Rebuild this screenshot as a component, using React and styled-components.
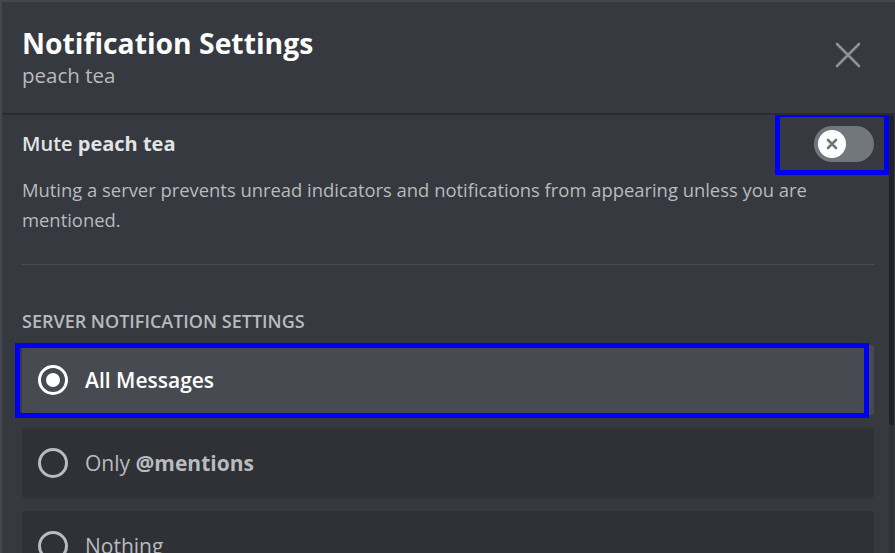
import React, { useState } from "react";
import styled, { createGlobalStyle } from "styled-components";

const GlobalStyle = createGlobalStyle`
  html, body {
    margin: 0;
    padding: 0;
    background: #36393f;
  }
  body {
    font-family: "Open Sans", "Noto Sans", "Liberation Sans", sans-serif;
  }
`;

const options = [
  { id: "all", label: "All Messages" },
  { id: "mentions", label: "Only ", strong: "@mentions" },
  { id: "nothing", label: "Nothing" },
];

const App = () => {
  const [muted, setMuted] = useState(false);
  const [level, setLevel] = useState("all");

  return (
    <>
      <GlobalStyle />
      <Modal>
        <Header>
          <HeaderText>
            <Title>Notification Settings</Title>
            <Subtitle>peach tea</Subtitle>
          </HeaderText>
          <CloseButton aria-label="Close">
            <svg width="26" height="26" viewBox="0 0 26 26">
              <path
                d="M2 2 L24 24 M24 2 L2 24"
                stroke="currentColor"
                strokeWidth="2.6"
                strokeLinecap="round"
              />
            </svg>
          </CloseButton>
        </Header>

        <Body>
          <Scroller>
            <MuteRow>
              <MuteLabel>
                Mute <strong>peach tea</strong>
              </MuteLabel>
              <ToggleWrap $highlight>
                <Toggle $on={muted} onClick={() => setMuted(!muted)}>
                  <Knob $on={muted}>
                    <svg width="12" height="12" viewBox="0 0 12 12">
                      <path
                        d="M2 2 L10 10 M10 2 L2 10"
                        stroke="#72767d"
                        strokeWidth="2.6"
                        strokeLinecap="round"
                      />
                    </svg>
                  </Knob>
                </Toggle>
              </ToggleWrap>
            </MuteRow>
            <Description>
              Muting a server prevents unread indicators and notifications from
              appearing unless you are mentioned.
            </Description>

            <Divider />

            <SectionLabel>Server Notification Settings</SectionLabel>
            <OptionList>
              {options.map((o) => (
                <Option
                  key={o.id}
                  $selected={level === o.id}
                  $highlight={o.id === "all"}
                  onClick={() => setLevel(o.id)}
                >
                  <Radio $selected={level === o.id} />
                  <OptionText $selected={level === o.id}>
                    {o.label}
                    {o.strong && <strong>{o.strong}</strong>}
                  </OptionText>
                </Option>
              ))}
            </OptionList>
          </Scroller>
          <ScrollRail>
            <ScrollThumb />
          </ScrollRail>
        </Body>
      </Modal>
    </>
  );
};

// Styled Components
const Modal = styled.div`
  width: 895px;
  height: 553px;
  display: flex;
  flex-direction: column;
  background: #36393f;
  border-left: 2px solid #45484e;
  border-top: 2px solid #45484e;
  box-sizing: border-box;
  overflow: hidden;
`;

const Header = styled.div`
  display: flex;
  justify-content: space-between;
  align-items: flex-start;
  height: 113px;
  padding: 22px 34px 0 20px;
  box-sizing: border-box;
  border-bottom: 2px solid #2a2c31;
  flex-shrink: 0;
`;

const HeaderText = styled.div`
  display: flex;
  flex-direction: column;
`;

const Title = styled.h1`
  margin: 0;
  font-size: 28.3px;
  line-height: 38px;
  font-weight: 700;
  color: #ffffff;
`;

const Subtitle = styled.div`
  font-size: 20.5px;
  line-height: 26px;
  color: #b9bbbe;
`;

const CloseButton = styled.button`
  margin-top: 18px;
  padding: 0;
  background: none;
  border: none;
  color: #8e9297;
  cursor: pointer;
  display: flex;
`;

const Body = styled.div`
  flex: 1;
  min-height: 0;
  display: flex;
`;

const Scroller = styled.div`
  flex: 1;
  overflow: hidden;
  padding: 10px 15px 0 20px;
`;

const ScrollRail = styled.div`
  width: 5px;
  margin-right: 1px;
  background: #2e3136;
  display: flex;
  flex-direction: column;
`;

const ScrollThumb = styled.div`
  height: 310px;
  background: #202225;
  border-radius: 3px;
`;

const MuteRow = styled.div`
  display: flex;
  justify-content: space-between;
  align-items: center;
  height: 37px;
`;

const MuteLabel = styled.div`
  font-size: 20px;
  font-weight: 600;
  color: #e3e4e6;

  strong {
    font-weight: 700;
  }
`;

const ToggleWrap = styled.div`
  position: relative;
  display: flex;

  &::after {
    content: "";
    display: ${(p) => (p.$highlight ? "block" : "none")};
    position: absolute;
    left: -39px;
    right: -15px;
    top: -14px;
    bottom: -13px;
    border: 5px solid #0000f0;
    pointer-events: none;
  }
`;

const Toggle = styled.div`
  width: 60px;
  height: 36px;
  border-radius: 18px;
  background: ${(p) => (p.$on ? "#3ba55c" : "#72767d")};
  display: flex;
  align-items: center;
  padding: 0 4px;
  box-sizing: border-box;
  justify-content: ${(p) => (p.$on ? "flex-end" : "flex-start")};
  cursor: pointer;
`;

const Knob = styled.div`
  width: 28px;
  height: 28px;
  border-radius: 50%;
  background: #ffffff;
  display: flex;
  align-items: center;
  justify-content: center;
`;

const Description = styled.p`
  margin: 13px 0 0;
  font-size: 18.4px;
  line-height: 30px;
  color: #b9bbbe;
  padding-right: 20px;
`;

const Divider = styled.div`
  height: 1px;
  background: #4a4d54;
  margin: 29px 0 46px;
`;

const SectionLabel = styled.h2`
  margin: 0 0 14px;
  font-size: 18px;
  line-height: 20px;
  font-weight: 600;
  text-transform: uppercase;
  color: #b9bbbe;
`;

const OptionList = styled.div`
  display: flex;
  flex-direction: column;
  gap: 13px;
`;

const Option = styled.div`
  position: relative;
  display: flex;
  align-items: center;
  gap: 17px;
  height: 70px;
  padding: 0 16px;
  border-radius: 3px;
  background: ${(p) => (p.$selected ? "#474a51" : "#2f3136")};
  cursor: pointer;

  &::after {
    content: "";
    display: ${(p) => (p.$highlight ? "block" : "none")};
    position: absolute;
    left: -7px;
    right: 5px;
    top: -2px;
    bottom: -3px;
    border: 5px solid #0000f0;
    pointer-events: none;
  }
`;

const Radio = styled.span`
  width: 30px;
  height: 30px;
  border-radius: 50%;
  box-sizing: border-box;
  border: 3px solid ${(p) => (p.$selected ? "#ffffff" : "#b9bbbe")};
  display: flex;
  align-items: center;
  justify-content: center;
  flex-shrink: 0;

  &::before {
    content: "";
    display: ${(p) => (p.$selected ? "block" : "none")};
    width: 14px;
    height: 14px;
    border-radius: 50%;
    background: #ffffff;
  }
`;

const OptionText = styled.span`
  font-size: 21px;
  font-weight: ${(p) => (p.$selected ? 600 : 500)};
  color: ${(p) => (p.$selected ? "#ffffff" : "#b9bbbe")};

  strong {
    font-weight: 700;
  }
`;

export default App;
